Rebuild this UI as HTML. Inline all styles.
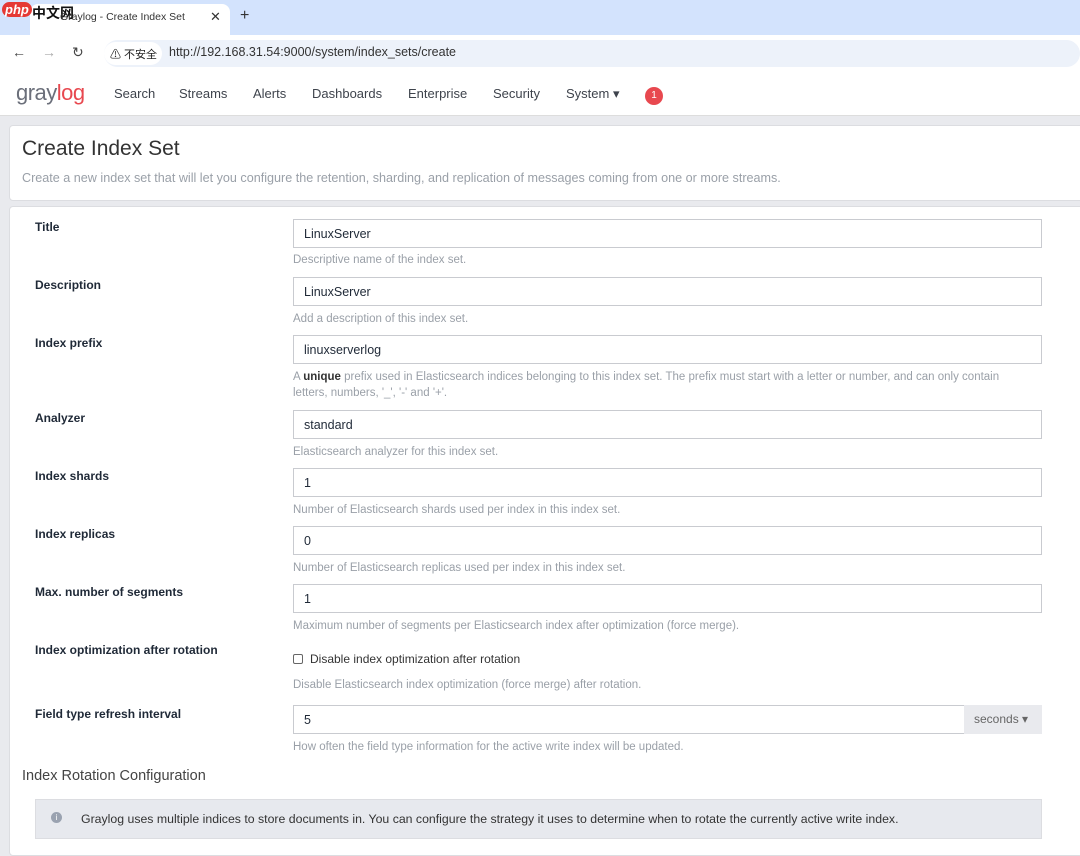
<!DOCTYPE html>
<html><head><meta charset="utf-8"><style>
*{box-sizing:border-box;margin:0;padding:0}
body{width:1080px;height:845px;overflow:hidden;background:#e9eaee;font-family:"Liberation Sans","Noto Sans CJK SC",sans-serif;position:relative;color:#1f1f1f}
.a{position:absolute}
.tabbar{left:0;top:0;width:1080px;height:35px;background:#d3e3fd}
.tab{left:30px;top:4px;width:200px;height:31px;background:#fff;border-radius:8px 8px 0 0}
.addr{left:0;top:35px;width:1080px;height:37px;background:#fff}
.url{left:104px;top:40px;width:976px;height:27px;background:#edf2fa;border-radius:14px}
.nav{left:0;top:72px;width:1080px;height:44px;background:#fff;border-bottom:1px solid #ddd}
.nav span{position:absolute;top:14px;font-size:13px;color:#3e434c}
.panel{background:#fff;border:1px solid #dcdde1;border-radius:4px}
.lbl{left:35px;font-size:12px;font-weight:bold;color:#1f2937}
.inp{left:293px;width:749px;height:29px;border:1px solid #c9cbd0;background:#fff;font-size:12.5px;padding:7px 10px;color:#1f2937}
.hlp{left:293px;font-size:11.5px;color:#9aa0a8;line-height:16px}
</style></head><body>
<div class="a tabbar"></div>
<div class="a tab"></div>
<div class="a" style="left:2px;top:2px;font-size:13px;color:#fff;background:#e53935;border-radius:8px;padding:0 3px;font-style:italic;font-weight:bold">php</div>
<div class="a" style="left:32px;top:3px;font-size:14px;font-weight:bold;color:#111">中文网</div>
<div class="a" style="left:60px;top:11px;font-size:10.5px;color:#333">Graylog - Create Index Set</div>
<div class="a" style="left:210px;top:9px;font-size:13px;color:#333">✕</div>
<div class="a" style="left:240px;top:7px;font-size:16px;color:#333">+</div>
<div class="a addr"></div>
<div class="a" style="left:12px;top:44px;font-size:14px;color:#444">←</div>
<div class="a" style="left:42px;top:44px;font-size:14px;color:#aaa">→</div>
<div class="a" style="left:72px;top:44px;font-size:14px;color:#444">↻</div>
<div class="a url"></div>
<div class="a" style="left:104px;top:42px;width:58px;height:23px;background:#fff;border-radius:12px"></div>
<div class="a" style="left:110px;top:46px;font-size:11px;color:#222">⚠ 不安全</div>
<div class="a" style="left:169px;top:45px;font-size:12.5px;color:#333">http://192.168.31.54:9000/system/index_sets/create</div>
<div class="a nav">
<div class="a" style="left:16px;top:8px;font-size:22px;color:#6b6f7a;letter-spacing:-0.5px">gray<span style="position:static;font-size:22px;color:#e8484f">log</span></div>
<span style="left:114px">Search</span><span style="left:179px">Streams</span><span style="left:253px">Alerts</span><span style="left:312px">Dashboards</span><span style="left:408px">Enterprise</span><span style="left:493px">Security</span><span style="left:566px">System ▾</span>
<div class="a" style="left:645px;top:15px;width:18px;height:18px;border-radius:9px;background:#e8484f;color:#fff;font-size:10px;text-align:center;line-height:18px">1</div>
</div>
<div class="a panel" style="left:9px;top:125px;width:1080px;height:76px"></div>
<div class="a" style="left:22px;top:137px;font-size:21px;color:#333">Create Index Set</div>
<div class="a" style="left:22px;top:171px;font-size:12.6px;color:#9aa0a8">Create a new index set that will let you configure the retention, sharding, and replication of messages coming from one or more streams.</div>
<div class="a panel" style="left:9px;top:206px;width:1080px;height:650px"></div>

<div class="a lbl" style="top:220px">Title</div>
<div class="a inp" style="top:219px">LinuxServer</div>
<div class="a hlp" style="top:252px">Descriptive name of the index set.</div>

<div class="a lbl" style="top:278px">Description</div>
<div class="a inp" style="top:277px">LinuxServer</div>
<div class="a hlp" style="top:311px">Add a description of this index set.</div>

<div class="a lbl" style="top:336px">Index prefix</div>
<div class="a inp" style="top:335px">linuxserverlog</div>
<div class="a hlp" style="top:369px;width:735px;line-height:16px">A <b style="color:#333">unique</b> prefix used in Elasticsearch indices belonging to this index set. The prefix must start with a letter or number, and can only contain letters, numbers, '_', '-' and '+'.</div>

<div class="a lbl" style="top:411px">Analyzer</div>
<div class="a inp" style="top:410px">standard</div>
<div class="a hlp" style="top:444px">Elasticsearch analyzer for this index set.</div>

<div class="a lbl" style="top:469px">Index shards</div>
<div class="a inp" style="top:468px">1</div>
<div class="a hlp" style="top:502px">Number of Elasticsearch shards used per index in this index set.</div>

<div class="a lbl" style="top:527px">Index replicas</div>
<div class="a inp" style="top:526px">0</div>
<div class="a hlp" style="top:560px">Number of Elasticsearch replicas used per index in this index set.</div>

<div class="a lbl" style="top:585px">Max. number of segments</div>
<div class="a inp" style="top:584px">1</div>
<div class="a hlp" style="top:618px">Maximum number of segments per Elasticsearch index after optimization (force merge).</div>

<div class="a lbl" style="top:643px">Index optimization after rotation</div>
<div class="a" style="left:293px;top:654px;width:10px;height:10px;border:1px solid #666;border-radius:2px"></div>
<div class="a" style="left:310px;top:652px;font-size:12px;color:#333">Disable index optimization after rotation</div>
<div class="a hlp" style="top:677px">Disable Elasticsearch index optimization (force merge) after rotation.</div>

<div class="a lbl" style="top:707px">Field type refresh interval</div>
<div class="a inp" style="top:705px;width:672px">5</div>
<div class="a" style="left:964px;top:705px;width:78px;height:29px;background:#e9eaee;font-size:12px;color:#666;padding:7px 10px">seconds ▾</div>
<div class="a hlp" style="top:739px">How often the field type information for the active write index will be updated.</div>

<div class="a" style="left:22px;top:768px;font-size:14.5px;color:#444">Index Rotation Configuration</div>
<div class="a" style="left:35px;top:799px;width:1007px;height:40px;background:#e7e9ee;border:1px solid #dcdde1"></div>
<div class="a" style="left:51px;top:812px;width:11px;height:11px;border-radius:6px;background:#9aa2b0;color:#fff;font-size:8px;text-align:center;line-height:11px">i</div>
<div class="a" style="left:81px;top:812px;font-size:12.3px;color:#333">Graylog uses multiple indices to store documents in. You can configure the strategy it uses to determine when to rotate the currently active write index.</div>
</body></html>
